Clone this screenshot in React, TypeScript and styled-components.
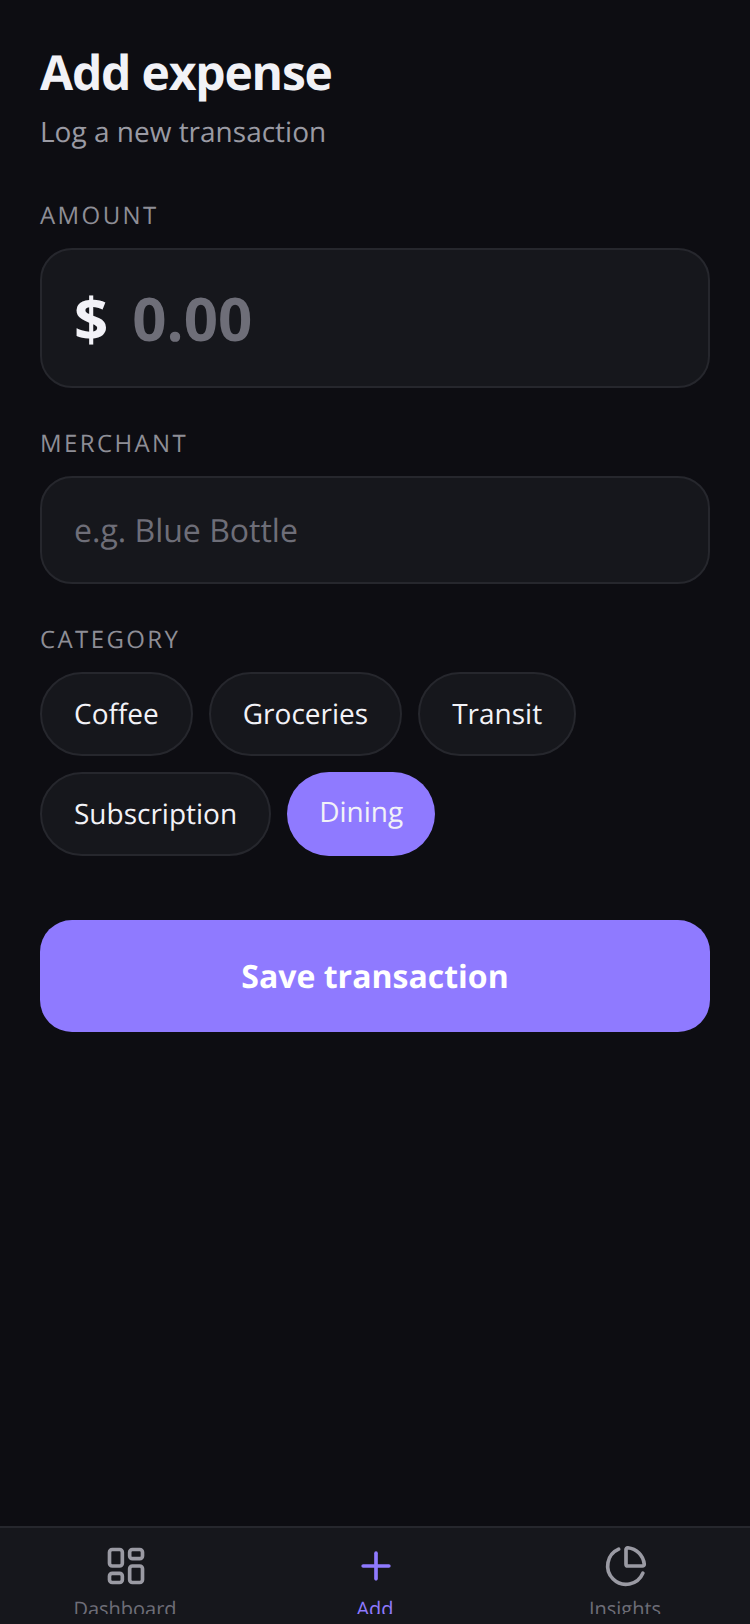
import React from "react";
import styled, { createGlobalStyle } from "styled-components";

const Global = createGlobalStyle`
  html, body { margin: 0; padding: 0; background: #0d0d12; }
  * { box-sizing: border-box; }
  body { font-family: "Open Sans", "Noto Sans", sans-serif; text-rendering: geometricPrecision; }
`;
const Screen = styled.div`
  width: 750px; height: 1624px; display: flex; flex-direction: column;
  background: #0d0d12; color: #f2f2f7; overflow: hidden;
`;
const Main = styled.main`
  flex: 1; min-height: 0; padding: 40px 40px 0; display: flex; flex-direction: column;
`;
const Title = styled.h1`
  margin: 0; font-size: 48px; line-height: 66px; font-weight: 700; letter-spacing: -1.2px; color: #f2f2f7;
`;
const Subtitle = styled.p`
  margin: 7px 0 0; font-size: 28px; line-height: 38px; color: #9a9aa3;
`;
const Label = styled.div<{ $top: number }>`
  margin-top: ${(p) => p.$top}px; font-size: 24px; line-height: 32px; letter-spacing: 2.4px; color: #8e8e96;
`;
const Field = styled.div<{ $tall?: boolean }>`
  margin-top: 16px; display: flex; align-items: center; gap: 24px;
  height: ${(p) => (p.$tall ? 140 : 108)}px; padding: 0 32px;
  background: #16171c; border: 2px solid #26272d; border-radius: 32px;
`;
const Dollar = styled.span`
  font-size: 60px; font-weight: 700; color: #f2f2f7;
`;
const AmountHint = styled.span`
  font-size: 60px; font-weight: 700; color: #6e6e78;
`;
const MerchantHint = styled.span`
  font-size: 32px; color: #6e6e78;
`;
const Chips = styled.div`
  margin-top: 16px; display: flex; flex-wrap: wrap; gap: 16px;
`;
const Chip = styled.div<{ $active?: boolean }>`
  padding: 20px 32px; font-size: 28px; line-height: 40px; border-radius: 999px;
  color: #f2f2f7;
  background: ${(p) => (p.$active ? "#8f7aff" : "#16171c")};
  border: ${(p) => (p.$active ? "none" : "2px solid #26272d")};
`;
const Save = styled.div`
  margin-top: 64px; height: 112px; border-radius: 32px; background: #8f7aff; color: #fff;
  display: flex; align-items: center; justify-content: center; font-size: 32px; font-weight: 700;
`;
const Nav = styled.nav`
  height: 98px; flex: none; background: #16171c; border-top: 2px solid #26272d;
`;
const Tabs = styled.div`
  height: 86px; display: flex; overflow: hidden;
`;
const Tab = styled.div<{ $active?: boolean }>`
  flex: 1; display: flex; flex-direction: column; align-items: center; padding-top: 16px; gap: 7px;
  color: ${(p) => (p.$active ? "#8f7aff" : "#9a9aa3")};
`;
const TabLabel = styled.span<{ $active?: boolean }>`
  font-size: 20px; line-height: 28px; color: ${(p) => (p.$active ? "#8f7aff" : "#6e6e78")};
`;
const Icon = styled.svg`
  width: 44px; height: 44px; margin-left: 2px; display: block; flex: none; fill: none; stroke: currentColor; stroke-width: 2;
  stroke-linecap: round; stroke-linejoin: round;
`;

export default function App() {
  return (
    <Screen>
      <Global />
      <Main>
        <Title>Add expense</Title>
        <Subtitle>Log a new transaction</Subtitle>
        <Label $top={49}>AMOUNT</Label>
        <Field $tall>
          <Dollar>$</Dollar>
          <AmountHint>0.00</AmountHint>
        </Field>
        <Label $top={40}>MERCHANT</Label>
        <Field>
          <MerchantHint>e.g. Blue Bottle</MerchantHint>
        </Field>
        <Label $top={40}>CATEGORY</Label>
        <Chips>
          <Chip>Coffee</Chip>
          <Chip>Groceries</Chip>
          <Chip>Transit</Chip>
          <Chip>Subscription</Chip>
          <Chip $active>Dining</Chip>
        </Chips>
        <Save>Save transaction</Save>
      </Main>
      <Nav>
        <Tabs>
          <Tab>
            <Icon viewBox="0 0 24 24">
              <rect x="3" y="3" width="7" height="9" rx="1.5" />
              <rect x="14" y="3" width="7" height="5" rx="1.5" />
              <rect x="14" y="12" width="7" height="9" rx="1.5" />
              <rect x="3" y="16" width="7" height="5" rx="1.5" />
            </Icon>
            <TabLabel>Dashboard</TabLabel>
          </Tab>
          <Tab $active>
            <Icon viewBox="0 0 24 24">
              <path d="M5 12h14" />
              <path d="M12 5v14" />
            </Icon>
            <TabLabel $active>Add</TabLabel>
          </Tab>
          <Tab>
            <Icon viewBox="0 0 24 24">
              <path d="M21 12c.552 0 1.005-.449.95-.998a10 10 0 0 0-8.953-8.951c-.55-.055-.998.398-.998.95v8a1 1 0 0 0 1 1z" />
              <path d="M21.21 15.89A10 10 0 1 1 8 2.83" />
            </Icon>
            <TabLabel>Insights</TabLabel>
          </Tab>
        </Tabs>
      </Nav>
    </Screen>
  );
}
